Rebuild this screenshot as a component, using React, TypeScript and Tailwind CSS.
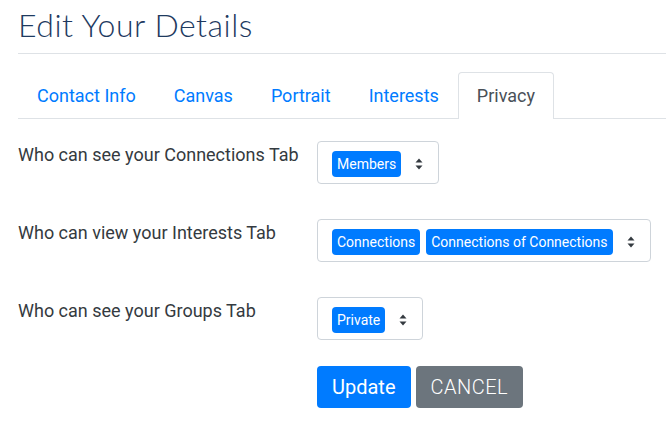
import React from "react";

const Arrows = () => (
  <svg width="8" height="12" viewBox="0 0 8 12" className="shrink-0">
    <path d="M4 0.5 L7.5 4.5 L0.5 4.5 Z" fill="#343a40" />
    <path d="M4 11.5 L7.5 7.5 L0.5 7.5 Z" fill="#343a40" />
  </svg>
);

const Badge = ({ children }: { children: React.ReactNode }) => (
  <span className="inline-flex h-[26px] items-center whitespace-nowrap rounded-[4px] bg-[#007bff] px-[5px] text-[14px] leading-none text-white">
    {children}
  </span>
);

const Select = ({ items }: { items: string[] }) => (
  <div className="flex h-[43px] items-start rounded-[4px] border border-[#ced4da] bg-white pl-[14px] pr-[15px] pt-[9px]">
    <div className="flex gap-[6px]">
      {items.map((i) => (
        <Badge key={i}>{i}</Badge>
      ))}
    </div>
    <div className="ml-[14px] flex h-[26px] items-center">
      <Arrows />
    </div>
  </div>
);

const Row = ({ label, items }: { label: string; items: string[] }) => (
  <div className="flex items-start">
    <div className="w-[299px] shrink-0 whitespace-nowrap text-[18px] leading-[27px] text-[#343a40]">{label}</div>
    <Select items={items} />
  </div>
);

export default function App() {
  const tabs = ["Contact Info", "Canvas", "Portrait", "Interests", "Privacy"];
  return (
    <div
      className="min-h-[434px] w-[666px] overflow-hidden bg-white pl-[18px]"
      style={{ fontFamily: "Roboto, 'Liberation Sans', sans-serif" }}
    >
      <h1
        className="pt-[6px] text-[32px] font-light leading-[38px] tracking-[0.5px] text-[#1e3a5f]"
        style={{ fontFamily: "Lato, 'Open Sans', sans-serif" }}
      >
        Edit Your Details
      </h1>
      <div className="mt-[9px] h-px bg-[#dee2e6]" />
      <div className="mt-[18px] flex border-b border-[#dee2e6]">
        {tabs.map((t) => {
          const active = t === "Privacy";
          return (
            <div
              key={t}
              className={
                active
                  ? "-mb-px rounded-t-[4px] border border-b-0 border-[#dee2e6] bg-white px-[18px] py-[9px] text-[18px] leading-[27px] text-[#495057]"
                  : "-mb-px border border-transparent px-[18px] py-[9px] text-[18px] leading-[27px] text-[#007bff]"
              }
            >
              {t}
            </div>
          );
        })}
      </div>
      <div className="mt-[22px] flex flex-col gap-[35px]">
        <Row label="Who can see your Connections Tab" items={["Members"]} />
        <Row
          label="Who can view your Interests Tab"
          items={["Connections", "Connections of Connections"]}
        />
        <Row label="Who can see your Groups Tab" items={["Private"]} />
      </div>
      <div className="mt-[26px] flex gap-[5px] pl-[299px]">
        <button className="h-[42px] rounded-[4px] bg-[#007bff] px-[15px] text-[20px] text-white">
          Update
        </button>
        <button className="h-[42px] rounded-[4px] bg-[#6c757d] px-[15px] text-[20px] font-light tracking-[0.5px] text-white">
          CANCEL
        </button>
      </div>
    </div>
  );
}
